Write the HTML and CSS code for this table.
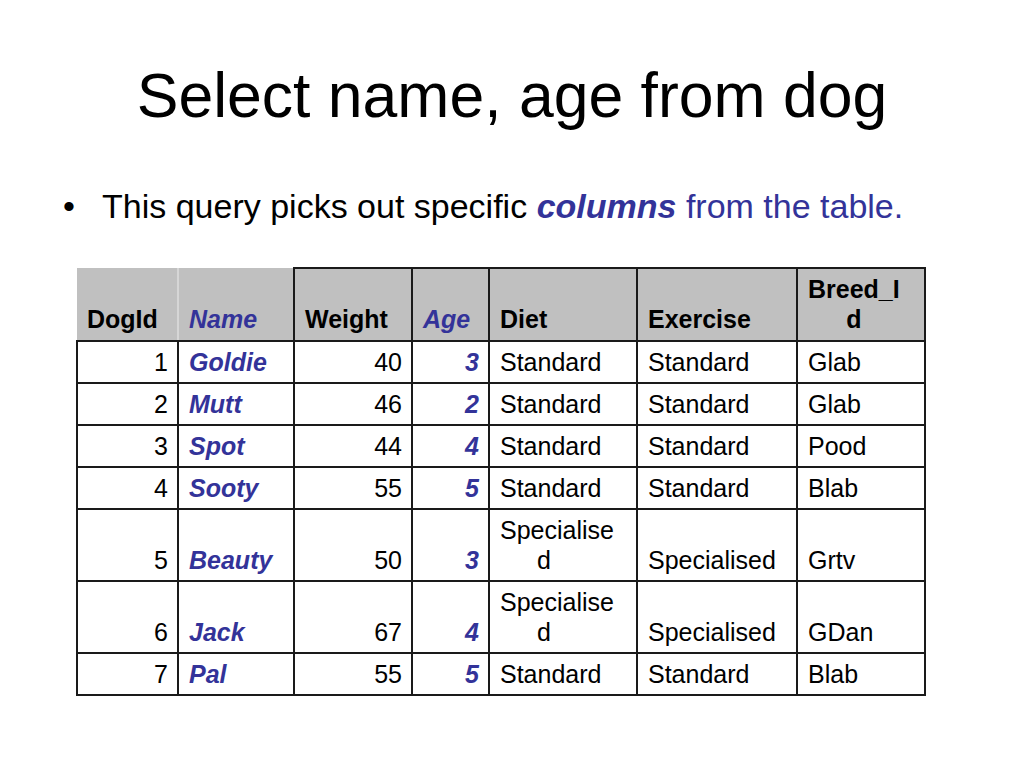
FILE: index.html
```html
<!DOCTYPE html>
<html>
<head>
<meta charset="utf-8">
<link rel="stylesheet" href="styles.css">
</head>
<body>
<div class="slide">
  <h1 class="title">Select name, age from dog</h1>
  <ul class="bullets">
    <li class="bullet"><span class="dot">•</span><span class="btext">This query picks out specific <em class="hl">columns</em><span class="hl2"> from the table.</span></span></li>
  </ul>
  <table class="dogs">
    <colgroup>
      <col class="c1"><col class="c2"><col class="c3"><col class="c4"><col class="c5"><col class="c6"><col class="c7">
    </colgroup>
    <thead>
      <tr>
        <th class="h-plain h-first">DogId</th>
        <th class="h-plain h-second blue">Name</th>
        <th>Weight</th>
        <th class="blue">Age</th>
        <th>Diet</th>
        <th>Exercise</th>
        <th><span class="wrapc">Breed_I<br>d</span></th>
      </tr>
    </thead>
    <tbody>
      <tr><td class="num">1</td><td class="blue">Goldie</td><td class="num">40</td><td class="num blue">3</td><td>Standard</td><td>Standard</td><td>Glab</td></tr>
      <tr><td class="num">2</td><td class="blue">Mutt</td><td class="num">46</td><td class="num blue">2</td><td>Standard</td><td>Standard</td><td>Glab</td></tr>
      <tr><td class="num">3</td><td class="blue">Spot</td><td class="num">44</td><td class="num blue">4</td><td>Standard</td><td>Standard</td><td>Pood</td></tr>
      <tr><td class="num">4</td><td class="blue">Sooty</td><td class="num">55</td><td class="num blue">5</td><td>Standard</td><td>Standard</td><td>Blab</td></tr>
      <tr><td class="num">5</td><td class="blue">Beauty</td><td class="num">50</td><td class="num blue">3</td><td>Specialise<span class="tail">d</span></td><td>Specialised</td><td>Grtv</td></tr>
      <tr><td class="num">6</td><td class="blue">Jack</td><td class="num">67</td><td class="num blue">4</td><td>Specialise<span class="tail">d</span></td><td>Specialised</td><td>GDan</td></tr>
      <tr><td class="num">7</td><td class="blue">Pal</td><td class="num">55</td><td class="num blue">5</td><td>Standard</td><td>Standard</td><td>Blab</td></tr>
    </tbody>
  </table>
</div>
</body>
</html>
```

FILE: styles.css
```css
html, body {
  margin: 0;
  padding: 0;
  background: #ffffff;
}

.slide {
  width: 1024px;
  height: 768px;
  font-family: "Liberation Sans", Arial, sans-serif;
  color: #000000;
  overflow: hidden;
}

.title {
  margin: 0;
  padding-top: 60px;
  font-size: 62.5px;
  font-weight: normal;
  line-height: 70px;
  text-align: center;
}

.bullets {
  list-style: none;
  margin: 56px 0 0 0;
  padding: 0 0 0 63px;
}

.bullet {
  display: flex;
  align-items: baseline;
  font-size: 34px;
  line-height: 40px;
}

.dot {
  width: 39px;
  flex: none;
}

.btext {
  color: #000000;
}

.hl {
  font-weight: bold;
  font-style: italic;
  color: #333399;
}

.hl2 {
  color: #333399;
}

.dogs {
  margin: 41px 0 0 76px;
  border-collapse: collapse;
  table-layout: fixed;
  width: 848px;
  font-size: 25px;
  line-height: 30px;
}

.c1 { width: 101px; }
.c2 { width: 116px; }
.c3 { width: 118px; }
.c4 { width: 77px; }
.c5 { width: 148px; }
.c6 { width: 160px; }
.c7 { width: 128px; }

.dogs th,
.dogs td {
  border: 2px solid #1a1a1a;
  padding: 5px 9px 5px 10px;
  vertical-align: bottom;
  text-align: left;
  white-space: nowrap;
}

.dogs th {
  background: #c0c0c0;
  font-weight: bold;
  padding-bottom: 6px;
}

.dogs th.h-plain {
  border-top: none;
}

.dogs th.h-first {
  border-left: none;
  border-right: 2px solid #d6d6d6;
}

.dogs td.num {
  text-align: right;
}

.dogs .blue {
  color: #333399;
  font-weight: bold;
  font-style: italic;
}

.wrapc {
  display: inline-block;
  text-align: center;
}

.tail {
  display: block;
  padding-left: 37px;
}
```
